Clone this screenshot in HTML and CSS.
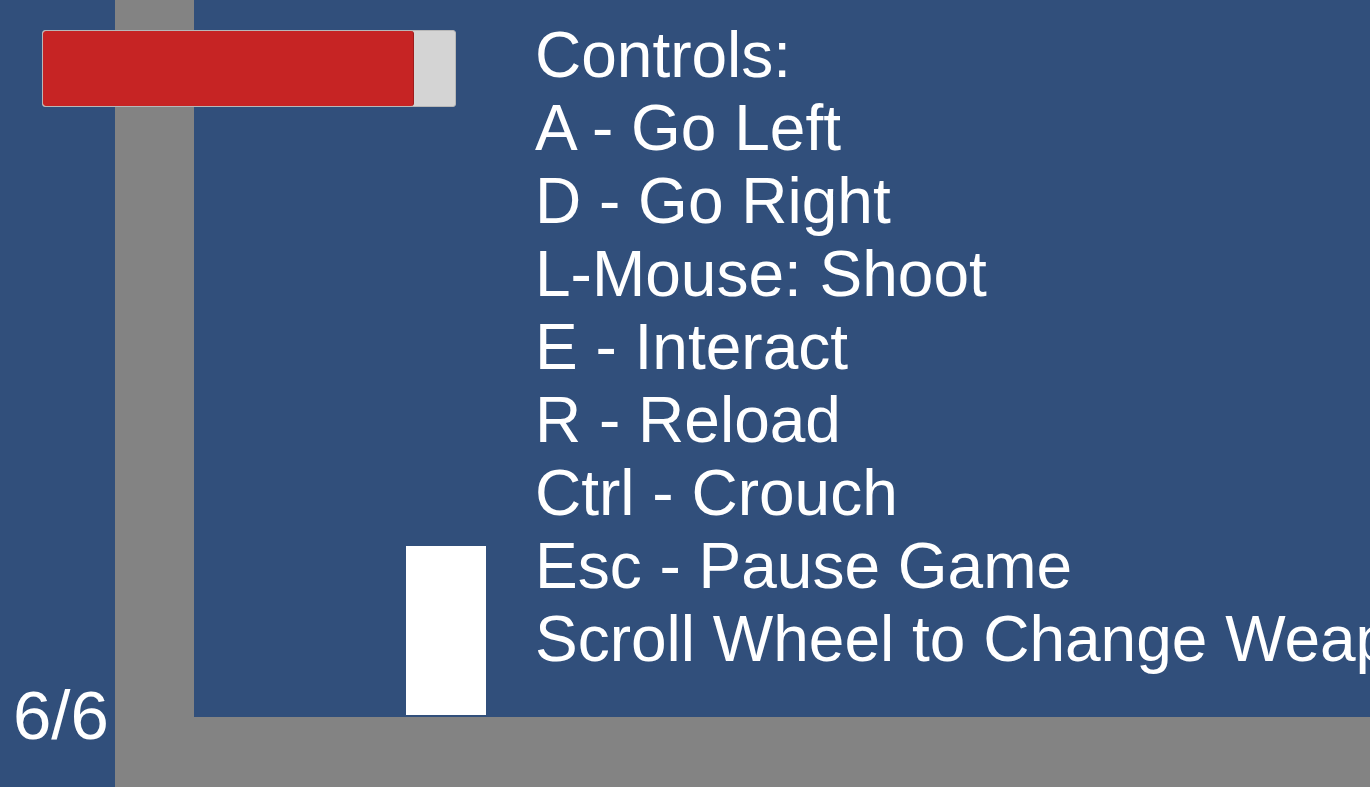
FILE: index.html
```html
<!DOCTYPE html>
<html lang="en">
<head>
    <meta charset="UTF-8">
    <meta name="viewport" content="width=device-width, initial-scale=1.0">
    <title>Game</title>
    <link rel="stylesheet" href="styles.css">
</head>
<body>
    <div class="scene">
        <div class="wall"></div>
        <div class="floor"></div>
        <div class="stage">
            <div class="player"></div>
            <ul class="controls">
                <li>Controls:</li>
                <li>A - Go Left</li>
                <li>D - Go Right</li>
                <li>L-Mouse: Shoot</li>
                <li>E - Interact</li>
                <li>R - Reload</li>
                <li>Ctrl - Crouch</li>
                <li>Esc - Pause Game</li>
                <li>Scroll Wheel to Change Weapon</li>
            </ul>
        </div>

        <!-- HUD -->
        <div class="health">
            <div class="health_fill" style="width: 371px;"></div>
        </div>
        <div class="ammo">6/6</div>
    </div>
</body>
</html>
```

FILE: styles.css
```css
html, body{
    margin: 0;
    padding: 0;
    overflow: hidden;
}
body{
    background-color: #314f7b;
    font-family: "Liberation Sans", Arial, sans-serif;
    color: #ffffff;
}
.scene{
    position: relative;
    width: 1370px;
    height: 787px;
    display: grid;
    grid-template-columns: 115px 79px 1fr;
    grid-template-rows: 717px 70px;
}
.wall{
    grid-column: 2;
    grid-row: 1 / 3;
    background-color: #838383;
}
.floor{
    grid-column: 2 / 4;
    grid-row: 2;
    background-color: #838383;
}
.stage{
    grid-column: 3;
    grid-row: 1;
    display: flex;
    align-items: flex-start;
    min-width: 0;
    overflow: hidden;
}
.player{
    flex-shrink: 0;
    width: 80px;
    height: 169px;
    margin-left: 212px;
    margin-top: 546px;
    background-color: #ffffff;
}
.controls{
    flex-shrink: 0;
    list-style-type: none;
    margin: 19px 0 0 49px;
    padding: 0;
    font-size: 64px;
    line-height: 73px;
    white-space: nowrap;
}
.health{
    position: absolute;
    left: 42px;
    top: 30px;
    width: 414px;
    height: 77px;
    background-color: #d4d4d4;
    border: 1px solid #b8b8b8;
    box-sizing: border-box;
    border-radius: 3px;
    overflow: hidden;
}
.health_fill{
    height: 100%;
    background-color: #c62424;
    border-right: 1px solid #9e1c1c;
    box-sizing: border-box;
    border-radius: 3px;
}
.ammo{
    position: absolute;
    left: 13px;
    top: 676px;
    font-size: 69px;
    line-height: 80px;
}
```
